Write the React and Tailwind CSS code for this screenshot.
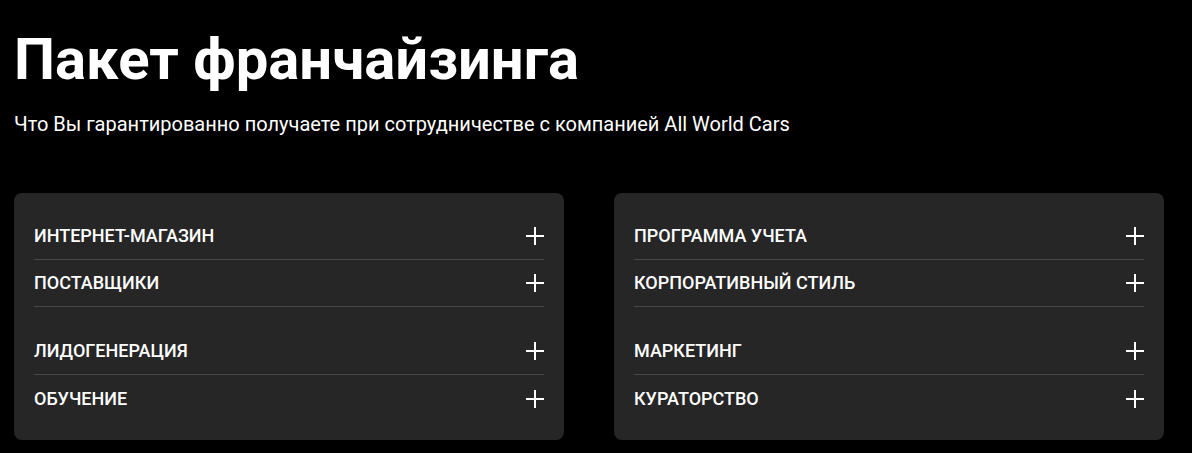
import React from 'react';

const columns = [
  [
    ['ИНТЕРНЕТ-МАГАЗИН', 'ПОСТАВЩИКИ'],
    ['ЛИДОГЕНЕРАЦИЯ', 'ОБУЧЕНИЕ'],
  ],
  [
    ['ПРОГРАММА УЧЕТА', 'КОРПОРАТИВНЫЙ СТИЛЬ'],
    ['МАРКЕТИНГ', 'КУРАТОРСТВО'],
  ],
];

function PlusIcon() {
  return (
    <svg width="18" height="18" viewBox="0 0 18 18" className="shrink-0">
      <rect x="8" y="0" width="2" height="18" fill="#fff" />
      <rect x="0" y="8" width="18" height="2" fill="#fff" />
    </svg>
  );
}

function Item({ title, last }) {
  return (
    <button
      className={
        'flex h-[47px] w-full items-center justify-between text-left ' +
        (last ? '' : 'border-b border-[#474747]')
      }
    >
      <span className="text-[18px] font-medium leading-none text-white">{title}</span>
      <PlusIcon />
    </button>
  );
}

export default function App() {
  return (
    <div
      className="min-h-[453px] bg-black px-[14px] pt-[30px] pb-[13px]"
      style={{ fontFamily: 'Roboto, "Noto Sans", sans-serif' }}
    >
      <h1 className="text-[58px] font-bold leading-none text-white">Пакет франчайзинга</h1>
      <p className="mt-[26px] text-[20px] leading-none text-white">
        Что Вы гарантированно получаете при сотрудничестве с компанией All World Cars
      </p>

      <div className="mt-[59px] flex gap-[50px]">
        {columns.map((groups, ci) => (
          <div key={ci} className="w-[550px] rounded-lg bg-[#262626] px-5 pt-5 pb-[18px]">
            <div className="flex flex-col gap-[21px]">
              {groups.map((group, gi) => (
                <div key={gi} className="flex flex-col">
                  {group.map((title, ii) => (
                    <Item
                      key={title}
                      title={title}
                      last={gi === groups.length - 1 && ii === group.length - 1}
                    />
                  ))}
                </div>
              ))}
            </div>
          </div>
        ))}
      </div>
    </div>
  );
}
